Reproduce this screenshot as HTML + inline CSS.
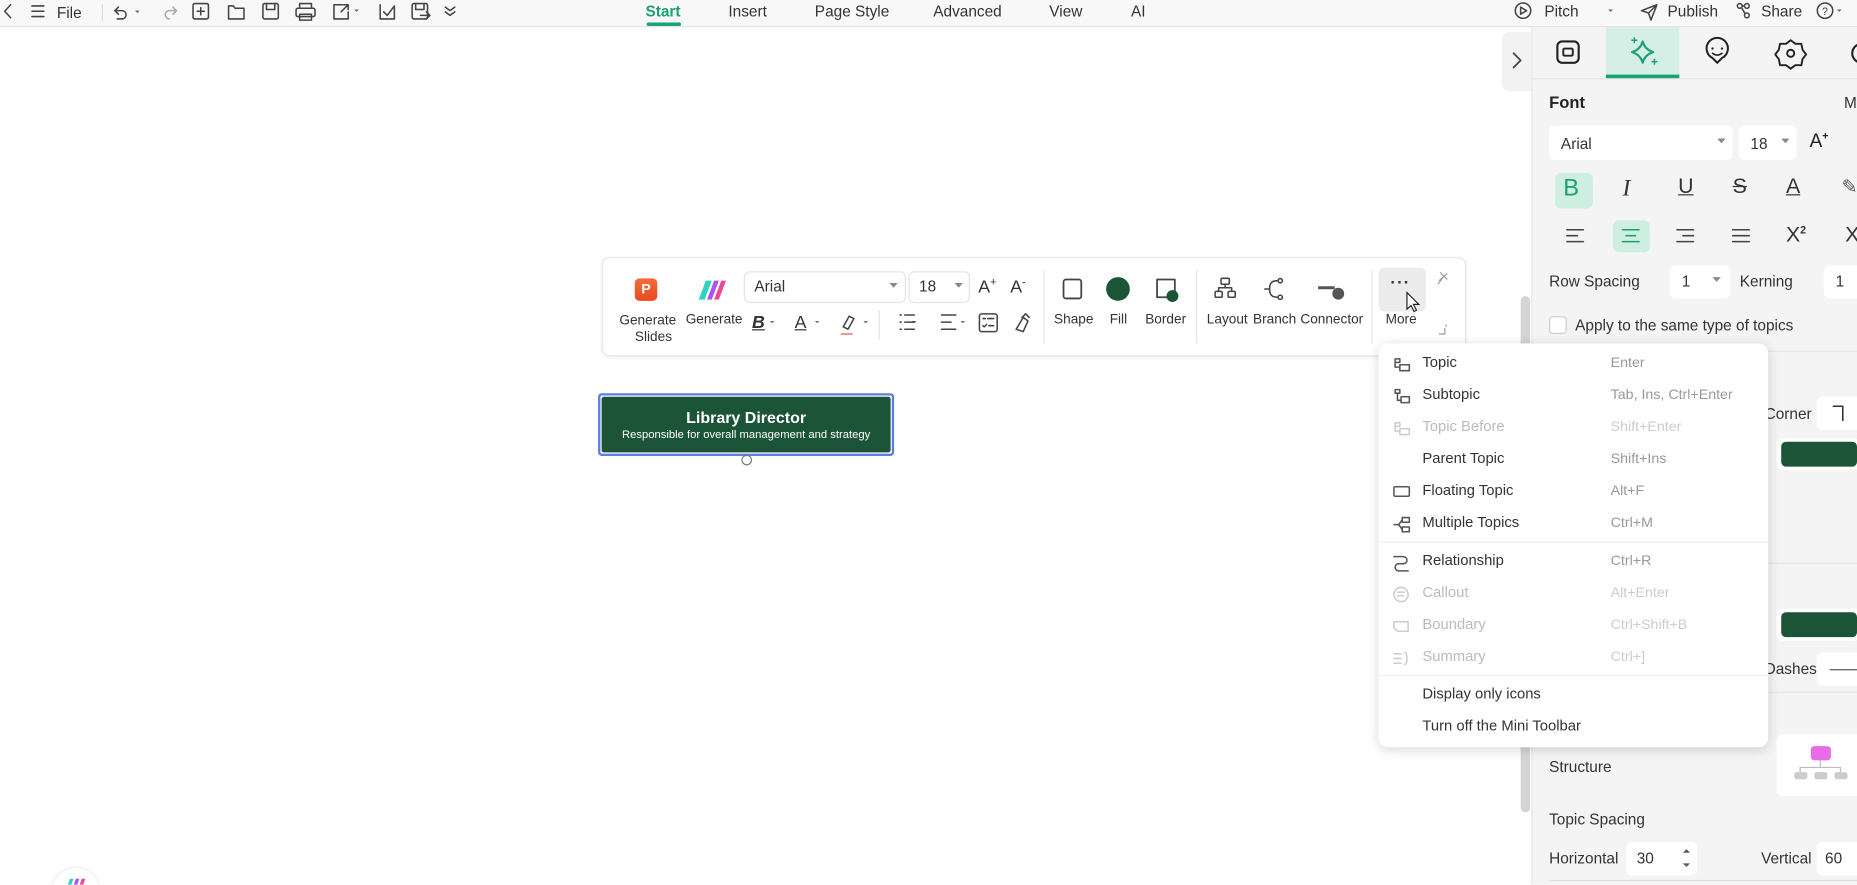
<!DOCTYPE html>
<html><head><meta charset="utf-8"><style>
html,body{margin:0;padding:0;width:1857px;height:885px;overflow:hidden;background:#fff}
#w{position:absolute;left:0;top:0;width:1568px;height:747px;transform:scale(1.18431);transform-origin:0 0;font-family:"Liberation Sans",Arial,sans-serif;color:#333;font-size:12px;overflow:hidden}
.a{position:absolute}
.t{position:absolute;white-space:nowrap}
svg{position:absolute;overflow:visible}
.ic{fill:none;stroke:#444;stroke-width:1.3;stroke-linecap:round;stroke-linejoin:round}
.mi{position:absolute;left:37px;font-size:12.5px;color:#333}
.ms{position:absolute;left:196px;font-size:12px;color:#999}
.dis{color:#bbb}
.box{position:absolute;background:#fff;border-radius:5px}
</style></head><body><div id="w">
<div class="a" style="left:0;top:0;width:1568px;height:22px;background:#f8f8f8;border-bottom:1px solid #e3e3e3"></div>
<svg style="left:0;top:0" width="400" height="22" class="ic">
<path d="M9 4L4 9.5L9 15" class="ic"/>
<path d="M27 5h10M27 9.5h10M27 14h10" class="ic"/>
<path d="M100 6l-3 3 3 3M97 9h6a3.5 3.5 0 010 7h-4" class="ic"/>
<path d="M114 9l2 2 2-2" style="fill:#666;stroke:none"/>
<path d="M146 6l3 3-3 3M149 9h-6a3.5 3.5 0 000 7" class="ic" style="stroke:#aaa"/>
<rect x="163" y="3" width="13" height="13" rx="1.5" class="ic"/><path d="M169.5 6.5v6M166.5 9.5h6" class="ic"/>
<path d="M193 5h4l1.5 2H206v9h-13z" class="ic"/>
<rect x="222" y="3" width="13" height="13" rx="1.5" class="ic"/><path d="M225 3v5h7V3" class="ic"/>
<rect x="250" y="7" width="16" height="7" rx="1.5" class="ic"/><path d="M253 7V3h10v4M253 12h10v5h-10z" class="ic"/>
<path d="M289 4h-7v12h12v-6M288 10l6-6M290 4h4v4" class="ic"/><path d="M299 8l2 2 2-2" style="fill:#666;stroke:none"/>
<path d="M321 4v12h12V6M324 10l3 3 6-8" class="ic"/>
<rect x="348" y="3" width="13" height="13" rx="1.5" class="ic"/><path d="M351 3v5h7V3M355 13h8M360 10l3 3-3 3" class="ic"/>
<path d="M376 6l4 3 4-3M376 10l4 3 4-3" class="ic"/>
</svg>
<div class="t" style="left:48px;top:3px;font-size:13px">File</div>
<div class="a" style="left:86px;top:3px;width:1px;height:15px;background:#ddd"></div>
<div class="t" style="left:545px;top:2px;font-size:13px;color:#1aa270;font-weight:bold">Start</div>
<div class="a" style="left:546px;top:19px;width:29px;height:3px;border-radius:2px;background:#1aa270"></div>
<div class="t" style="left:615px;top:2px;font-size:13px">Insert</div>
<div class="t" style="left:688px;top:2px;font-size:13px">Page Style</div>
<div class="t" style="left:788px;top:2px;font-size:13px">Advanced</div>
<div class="t" style="left:886px;top:2px;font-size:13px">View</div>
<div class="t" style="left:955px;top:2px;font-size:13px">AI</div>
<svg style="left:1270px;top:0" width="300" height="22">
<circle cx="16" cy="9" r="6.5" class="ic"/><path d="M14 6v6l5-3z" class="ic"/>
<path d="M88 8l2 2 2-2" style="fill:#666"/>
<path d="M116 9l13-5-5 13-2-6zM122 11l7-7" class="ic"/>
<circle cx="199" cy="5" r="2" class="ic"/><circle cx="205" cy="5" r="2" class="ic"/><circle cx="205" cy="13" r="2" class="ic"/><path d="M200.5 6.5l3 5M201 5h2" class="ic"/>
<circle cx="271" cy="9" r="6.5" class="ic"/><text x="268.5" y="12.5" font-size="9" fill="#444" font-family="Liberation Sans">?</text>
<path d="M281 8l2 2 2-2" style="fill:#666"/>
</svg>
<div class="t" style="left:1304px;top:2px;font-size:13px">Pitch</div>
<div class="t" style="left:1408px;top:2px;font-size:13px">Publish</div>
<div class="t" style="left:1487px;top:2px;font-size:13px">Share</div>

<div class="a" style="left:1268px;top:27px;width:26px;height:50px;background:#f2f2f2;border-radius:6px 0 0 6px"></div>
<svg style="left:1268px;top:27px" width="26" height="50"><path d="M10 18l6 6-6 6" class="ic" style="stroke-width:1.5"/></svg>
<div class="a" style="left:1284px;top:250px;width:8px;height:436px;background:#d4d4d4;border-radius:4px"></div>

<div class="a" style="left:1293px;top:23px;width:275px;height:724px;background:#f4f4f4;border-left:1px solid #e6e6e6"></div>
<div class="a" style="left:1293px;top:66px;width:275px;height:1px;background:#e4e4e4"></div>
<div class="a" style="left:1356px;top:23px;width:62px;height:43px;background:#d6efe6"></div>
<div class="a" style="left:1356px;top:63px;width:62px;height:3px;background:#1aa270"></div>
<svg style="left:1293px;top:23px" width="275" height="43">
<rect x="22" y="12" width="18" height="18" rx="4" class="ic" style="stroke:#222;stroke-width:1.8"/><rect x="27" y="18" width="8" height="6" rx="1" class="ic" style="stroke:#222;stroke-width:1.6"/>
<path d="M94 12q2 7 9 9q-7 2-9 9q-2-7-9-9q7-2 9-9z" class="ic" style="stroke:#1aa270;stroke-width:1.8"/><path d="M87 9v4M85 11h4M104 27v4M102 29h4" class="ic" style="stroke:#1aa270"/>
<path d="M157 30l-4-4a9 9 0 118 0z" class="ic" style="stroke:#222;stroke-width:1.7"/><circle cx="153" cy="18" r="1" fill="#222"/><circle cx="161" cy="18" r="1" fill="#222"/><path d="M153 22q4 3 8 0" class="ic" style="stroke:#222"/>
<path d="M219 11l4 3 5 0 1 5 3 4-3 4-1 5-5 0-4 3-4-3-5 0-1-5-3-4 3-4 1-5 5 0z" class="ic" style="stroke:#222;stroke-width:1.6"/><circle cx="219" cy="22" r="3" class="ic" style="stroke:#222;stroke-width:1.6"/>
<path d="M279 14a8 8 0 000 16" class="ic" style="stroke:#222;stroke-width:1.8"/>
</svg>
<div class="t" style="left:1308px;top:78px;font-size:14px;font-weight:bold;color:#222">Font</div>
<div class="t" style="left:1557px;top:79px;font-size:13px">M</div>
<div class="box" style="left:1308px;top:106px;width:155px;height:29px"></div>
<div class="t" style="left:1318px;top:114px;font-size:13px">Arial</div>
<svg style="left:1450px;top:117px" width="8" height="6"><path d="M0 0h7l-3.5 4z" fill="#888"/></svg>
<div class="box" style="left:1468px;top:106px;width:49px;height:29px"></div>
<div class="t" style="left:1478px;top:114px;font-size:13px">18</div>
<svg style="left:1504px;top:117px" width="8" height="6"><path d="M0 0h7l-3.5 4z" fill="#888"/></svg>
<div class="t" style="left:1528px;top:110px;font-size:16px;color:#222">A<sup style="font-size:9px;font-weight:bold">+</sup></div>
<div class="a" style="left:1313px;top:146px;width:32px;height:30px;background:#cfeee2;border-radius:5px"></div>
<div class="t" style="left:1320px;top:148px;font-size:20px;color:#1aa270">B</div>
<div class="t" style="left:1370px;top:148px;font-size:20px;font-family:'Liberation Serif',serif;font-style:italic;color:#333">I</div>
<div class="t" style="left:1417px;top:147px;font-size:18px;text-decoration:underline;color:#333">U</div>
<div class="t" style="left:1463px;top:147px;font-size:18px;text-decoration:line-through;color:#333">S</div>
<div class="t" style="left:1508px;top:147px;font-size:18px;color:#333;text-decoration:underline">A</div>
<div class="t" style="left:1555px;top:148px;font-size:16px;color:#555">✎</div>
<svg style="left:1300px;top:185px" width="268" height="30">
<path d="M23 9h14M23 14h9M23 19h14" class="ic"/>
<rect x="62" y="1" width="31" height="27" rx="5" fill="#cfeee2"/>
<path d="M70 9h14M73 14h8M70 19h14" class="ic" style="stroke:#1aa270"/>
<path d="M116 9h14M121 14h9M116 19h14" class="ic"/>
<path d="M163 9h14M163 14h14M163 19h14" class="ic"/>
</svg>
<div class="t" style="left:1508px;top:188px;font-size:18px">X<sup style="font-size:9px;font-weight:bold">2</sup></div>
<div class="t" style="left:1558px;top:188px;font-size:18px">X</div>
<div class="t" style="left:1308px;top:230px;font-size:13px">Row Spacing</div>
<div class="box" style="left:1410px;top:224px;width:51px;height:28px"></div>
<div class="t" style="left:1420px;top:230px;font-size:13px">1</div>
<svg style="left:1446px;top:234px" width="8" height="6"><path d="M0 0h7l-3.5 4z" fill="#888"/></svg>
<div class="t" style="left:1469px;top:230px;font-size:13px">Kerning</div>
<div class="box" style="left:1540px;top:224px;width:40px;height:28px"></div>
<div class="t" style="left:1550px;top:230px;font-size:13px">1</div>
<div class="a" style="left:1308px;top:267px;width:13px;height:13px;background:#fff;border:1px solid #ccc;border-radius:3px"></div>
<div class="t" style="left:1330px;top:267px;font-size:13px">Apply to the same type of topics</div>
<div class="a" style="left:1293px;top:296px;width:275px;height:1px;background:#e4e4e4"></div>
<div class="t" style="left:1490px;top:342px;font-size:13px">Corner</div>
<div class="box" style="left:1534px;top:335px;width:40px;height:28px"></div>
<svg style="left:1534px;top:335px" width="34" height="28"><path d="M14 8h8v12" class="ic" style="stroke:#333"/></svg>
<div class="box" style="left:1500px;top:370px;width:70px;height:27px"></div>
<div class="a" style="left:1504px;top:373px;width:64px;height:21px;background:#1b5436;border-radius:4px"></div>
<div class="a" style="left:1293px;top:475px;width:275px;height:1px;background:#e4e4e4"></div>
<div class="box" style="left:1500px;top:514px;width:70px;height:27px"></div>
<div class="a" style="left:1504px;top:517px;width:64px;height:21px;background:#1b5436;border-radius:4px"></div>
<div class="t" style="left:1490px;top:557px;font-size:13px">Dashes</div>
<div class="box" style="left:1534px;top:551px;width:40px;height:28px"></div>
<div class="a" style="left:1545px;top:565px;width:25px;height:1px;background:#555"></div>
<div class="a" style="left:1293px;top:584px;width:275px;height:1px;background:#e4e4e4"></div>
<div class="t" style="left:1308px;top:640px;font-size:13px">Structure</div>
<div class="box" style="left:1500px;top:620px;width:75px;height:52px"></div>
<svg style="left:1500px;top:620px" width="68" height="52">
<rect x="29" y="10" width="17" height="12" rx="3" fill="#e86be8"/>
<path d="M37 22v6M20 33v-5h34v5" stroke="#bbb" fill="none"/>
<rect x="15" y="32" width="11" height="6" rx="2" fill="#ccc"/><rect x="32" y="32" width="11" height="6" rx="2" fill="#ccc"/><rect x="49" y="32" width="11" height="6" rx="2" fill="#ccc"/>
</svg>
<div class="t" style="left:1308px;top:684px;font-size:13px">Topic Spacing</div>
<div class="t" style="left:1308px;top:717px;font-size:13px">Horizontal</div>
<div class="box" style="left:1373px;top:711px;width:60px;height:28px"></div>
<div class="t" style="left:1382px;top:717px;font-size:13px">30</div>
<svg style="left:1419px;top:714px" width="10" height="22"><path d="M2 6l3-3 3 3zM2 15l3 3 3-3z" fill="#555"/></svg>
<div class="t" style="left:1487px;top:717px;font-size:13px">Vertical</div>
<div class="box" style="left:1534px;top:711px;width:40px;height:28px"></div>
<div class="t" style="left:1541px;top:717px;font-size:13px">60</div>
<div class="a" style="left:1308px;top:743px;width:260px;height:1px;background:#ddd"></div>

<div class="a" style="left:508px;top:217px;width:728px;height:82px;background:#fff;border:1px solid #e6e6e6;border-radius:7px;box-shadow:0 1px 4px rgba(0,0,0,.06)"></div>
<div class="a" style="left:536px;top:235px;width:19px;height:19px;background:linear-gradient(#f66b3a,#e84a1e);border-radius:4px;color:#fff;font-size:12px;font-weight:bold;text-align:center;line-height:19px">P</div>
<svg style="left:588px;top:235px" width="26" height="19"><path d="M2 18L8 2h5L7 18z" fill="#2dd4bf"/><path d="M9 18L15 2h4L13 18z" fill="#a855f7"/><path d="M15 18L21 2h4L19 18z" fill="#ec4899"/></svg>
<div class="t" style="left:523px;top:264px;font-size:11.5px;text-align:center;line-height:14px">Generate<br>&nbsp;&nbsp;&nbsp;Slides</div>
<div class="t" style="left:579px;top:264px;font-size:11.5px">Generate</div>
<div class="a" style="left:628px;top:229px;width:135px;height:25px;border:1px solid #e3e3e3;border-radius:5px"></div>
<div class="t" style="left:637px;top:234px;font-size:13px">Arial</div>
<svg style="left:751px;top:239px" width="8" height="6"><path d="M0 0h7l-3.5 4z" fill="#888"/></svg>
<div class="a" style="left:767px;top:229px;width:50px;height:25px;border:1px solid #e3e3e3;border-radius:5px"></div>
<div class="t" style="left:776px;top:234px;font-size:13px">18</div>
<svg style="left:806px;top:239px" width="8" height="6"><path d="M0 0h7l-3.5 4z" fill="#888"/></svg>
<div class="t" style="left:826px;top:233px;font-size:15px">A<sup style="font-size:9px">+</sup></div>
<div class="t" style="left:853px;top:233px;font-size:15px">A<sup style="font-size:9px">-</sup></div>
<div class="t" style="left:635px;top:264px;font-size:15px;font-weight:bold;font-style:italic;text-decoration:underline">B</div>
<div class="t" style="left:671px;top:264px;font-size:15px;text-decoration:underline">A</div>
<svg style="left:600px;top:262px" width="290" height="24">
<path d="M50 9l2 2 2-2M88 9l2 2 2-2M129 9l2 2 2-2M170 9l2 2 2-2M211 9l2 2 2-2" fill="#777"/>
<path d="M112 14l5-9 4 2-5 9z" class="ic"/><path d="M110 20h10" stroke="#e88" stroke-width="1.5"/>
<path d="M164 4h8M164 10h8M164 16h8M160 4h1M160 10h1M160 16h1" class="ic"/>
<path d="M195 4h12M195 10h8M195 16h12" class="ic"/>
<rect x="227" y="3" width="15" height="15" rx="2" class="ic"/><path d="M230 7h2M234 7h5M230 13l1 1 2-2M235 13h4" class="ic"/>
<path d="M258 16l6-10 4 3-4 9zM263 6l3-3 3 3" class="ic"/>
</svg>
<div class="a" style="left:742px;top:262px;width:1px;height:25px;background:#e5e5e5"></div>
<div class="a" style="left:881px;top:228px;width:1px;height:62px;background:#e5e5e5"></div>
<div class="a" style="left:1010px;top:228px;width:1px;height:62px;background:#e5e5e5"></div>
<div class="a" style="left:1158px;top:228px;width:1px;height:62px;background:#e5e5e5"></div>
<svg style="left:890px;top:230px" width="270" height="30">
<rect x="8" y="6" width="15" height="16" rx="2" class="ic" style="stroke-width:1.5"/>
<circle cx="54" cy="14" r="10" fill="#1b5436"/>
<rect x="87" y="6" width="15" height="15" class="ic" style="stroke-width:1.5"/><circle cx="100" cy="20" r="5" fill="#1b5436"/>
<rect x="141" y="5" width="7" height="5" rx="1" class="ic"/><path d="M144.5 10v3M139 16v-3h11v3" class="ic"/><rect x="136" y="16" width="6" height="5" rx="1" class="ic"/><rect x="147" y="16" width="6" height="5" rx="1" class="ic"/>
<path d="M178 14h4M182 14c0-6 3-7 7-7M182 14c0 6 3 7 7 7" class="ic"/><circle cx="191" cy="7" r="1.8" class="ic"/><circle cx="191" cy="21" r="1.8" class="ic"/>
<path d="M223 13h14" stroke="#555" stroke-width="2.5"/><circle cx="240" cy="18" r="5" fill="#555"/>
</svg>
<div class="t" style="left:890px;top:264px;font-size:11.5px">Shape</div>
<div class="t" style="left:937px;top:264px;font-size:11.5px">Fill</div>
<div class="t" style="left:967px;top:264px;font-size:11.5px">Border</div>
<div class="t" style="left:1019px;top:264px;font-size:11.5px">Layout</div>
<div class="t" style="left:1058px;top:264px;font-size:11.5px">Branch</div>
<div class="t" style="left:1098px;top:264px;font-size:11.5px">Connector</div>
<div class="a" style="left:1164px;top:226px;width:40px;height:37px;background:#ececec;border-radius:5px"></div>
<div class="t" style="left:1174px;top:230px;font-size:14px;font-weight:bold;letter-spacing:1px">···</div>
<div class="t" style="left:1170px;top:264px;font-size:11.5px">More</div>
<svg style="left:1186px;top:246px" width="14" height="20"><path d="M2 1v14l3.5-3 2.5 5 2-1-2.5-5H12z" fill="#fff" stroke="#222" stroke-width="1"/></svg>
<svg style="left:1212px;top:228px" width="14" height="14"><path d="M4 2l6 6M3 9l7-6M6 7l-4 5" stroke="#999" fill="none"/></svg>
<svg style="left:1212px;top:272px" width="14" height="14"><path d="M3 10h5V5M9 2v2" stroke="#999" fill="none"/></svg>

<div class="a" style="left:505px;top:332px;width:246px;height:49px;border:2px solid #5b7ee0;border-radius:3px;background:#fff"></div>
<div class="a" style="left:508px;top:335px;width:244px;height:47px;background:#1b5436;border-radius:2px"></div>
<div class="t" style="left:508px;top:345px;width:244px;text-align:center;color:#fff;font-size:13.5px;font-weight:bold">Library Director</div>
<div class="t" style="left:508px;top:362px;width:244px;text-align:center;color:#fff;font-size:9.5px">Responsible for overall management and strategy</div>
<div class="a" style="left:626px;top:384px;width:7px;height:7px;border:1px solid #777;border-radius:50%;background:#fff"></div>

<div class="a" style="left:1164px;top:290px;width:329px;height:341px;background:#fff;border-radius:8px;box-shadow:0 2px 10px rgba(0,0,0,.15)"></div>
<div class="a" style="left:1164px;top:290px;width:329px;height:341px">
<svg style="left:12px;top:10px" width="20" height="330" class="ic">
<g class="ic" style="stroke:#555"><path d="M2 3v7h4M2 3h4v3H2"/><rect x="6" y="8" width="8" height="5"/></g>
<g class="ic" style="stroke:#555" transform="translate(0,27)"><path d="M2 2h4v3H2zM4 5v6h3"/><rect x="7" y="8" width="7" height="5"/></g>
<g class="ic" style="stroke:#ccc" transform="translate(0,54)"><path d="M2 3v7h4M2 3h4v3H2"/><rect x="6" y="8" width="8" height="5"/></g>
<rect x="1" y="111" width="13" height="8" rx="1" style="stroke:#555"/>
<g transform="translate(0,135)" style="stroke:#555"><path d="M1 8h4M5 8l3-4M5 8l3 4"/><rect x="8" y="2" width="6" height="4"/><rect x="8" y="10" width="6" height="4"/></g>
<g transform="translate(0,167)" style="stroke:#555"><path d="M1 3h8a3 3 0 010 6H5a3 3 0 000 6h8"/></g>
<g transform="translate(0,194)" style="stroke:#ccc"><circle cx="7" cy="8" r="6"/><path d="M4 6h6M4 9h5"/></g>
<g transform="translate(0,221)" style="stroke:#ccc"><path d="M1 4h12v8H4L1 9z"/></g>
<g transform="translate(0,248)" style="stroke:#ccc"><path d="M1 4h6M1 8h6M1 12h6M10 3q2 0 2 5t-2 5"/></g>
</svg>
<div class="t mi" style="top:9px">Topic</div><div class="t ms" style="top:9px">Enter</div>
<div class="t mi" style="top:36px">Subtopic</div><div class="t ms" style="top:36px">Tab, Ins, Ctrl+Enter</div>
<div class="t mi dis" style="top:63px">Topic Before</div><div class="t ms dis" style="top:63px;color:#ccc">Shift+Enter</div>
<div class="t mi" style="top:90px">Parent Topic</div><div class="t ms" style="top:90px">Shift+Ins</div>
<div class="t mi" style="top:117px">Floating Topic</div><div class="t ms" style="top:117px">Alt+F</div>
<div class="t mi" style="top:144px">Multiple Topics</div><div class="t ms" style="top:144px">Ctrl+M</div>
<div class="a" style="left:0;top:167px;width:329px;height:1px;background:#eee"></div>
<div class="t mi" style="top:176px">Relationship</div><div class="t ms" style="top:176px">Ctrl+R</div>
<div class="t mi dis" style="top:203px">Callout</div><div class="t ms" style="top:203px;color:#ccc">Alt+Enter</div>
<div class="t mi dis" style="top:230px">Boundary</div><div class="t ms" style="top:230px;color:#ccc">Ctrl+Shift+B</div>
<div class="t mi dis" style="top:257px">Summary</div><div class="t ms" style="top:257px;color:#ccc">Ctrl+]</div>
<div class="a" style="left:0;top:280px;width:329px;height:1px;background:#eee"></div>
<div class="t mi" style="top:289px">Display only icons</div>
<div class="t mi" style="top:316px">Turn off the Mini Toolbar</div>
</div>

<div class="a" style="left:44px;top:733px;width:40px;height:40px;border-radius:50%;background:#fff;box-shadow:0 0 4px rgba(0,0,0,.12)"></div>
<svg style="left:55px;top:741px" width="20" height="10"><path d="M1 10L4 1h3L4 10z" fill="#2dd4bf"/><path d="M6 10L9 1h3L9 10z" fill="#a855f7"/><path d="M11 10L14 1h3l-3 9z" fill="#ec4899"/></svg>
</div></body></html>
